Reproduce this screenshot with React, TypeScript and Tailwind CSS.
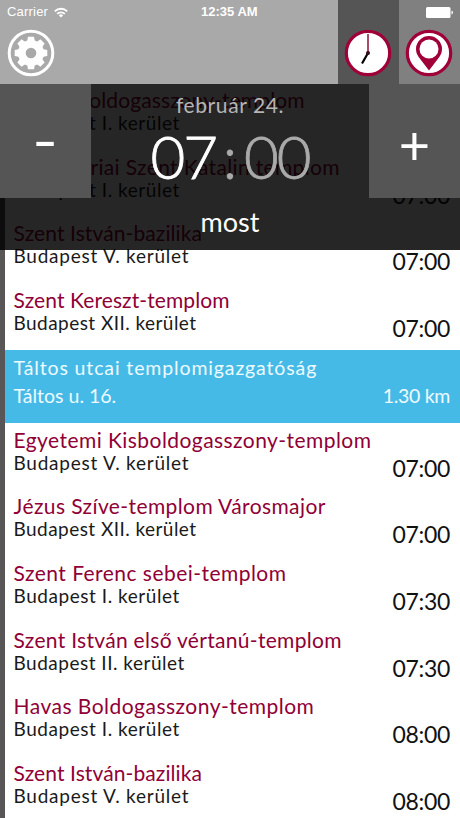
import React from 'react';

interface Mass {
    name: string;
    district: string;
    time: string;
    nameTracking: string;
    districtTracking: string;
}

const upcoming: Mass[] = [
    { name: 'Havas Boldogasszony-templom', district: 'Budapest I. kerület', time: '07:00', nameTracking: 'tracking-[0.12px]', districtTracking: 'tracking-[0.55px]' },
    { name: 'Alexandriai Szent Katalin templom', district: 'Budapest I. kerület', time: '07:00', nameTracking: 'tracking-[0.35px]', districtTracking: 'tracking-[0.55px]' },
    { name: 'Szent István-bazilika', district: 'Budapest V. kerület', time: '07:00', nameTracking: 'tracking-[0.1px]', districtTracking: 'tracking-[0.76px]' },
    { name: 'Szent Kereszt-templom', district: 'Budapest XII. kerület', time: '07:00', nameTracking: 'tracking-[0.1px]', districtTracking: 'tracking-[0.45px]' },
];

const later: Mass[] = [
    { name: 'Egyetemi Kisboldogasszony-templom', district: 'Budapest V. kerület', time: '07:00', nameTracking: 'tracking-[0.44px]', districtTracking: 'tracking-[0.76px]' },
    { name: 'Jézus Szíve-templom Városmajor', district: 'Budapest XII. kerület', time: '07:00', nameTracking: 'tracking-[0.4px]', districtTracking: 'tracking-[0.45px]' },
    { name: 'Szent Ferenc sebei-templom', district: 'Budapest I. kerület', time: '07:30', nameTracking: 'tracking-[0.46px]', districtTracking: 'tracking-[0.55px]' },
    { name: 'Szent István első vértanú-templom', district: 'Budapest II. kerület', time: '07:30', nameTracking: 'tracking-[0.3px]', districtTracking: 'tracking-[0.5px]' },
    { name: 'Havas Boldogasszony-templom', district: 'Budapest I. kerület', time: '08:00', nameTracking: 'tracking-[0.48px]', districtTracking: 'tracking-[0.55px]' },
    { name: 'Szent István-bazilika', district: 'Budapest V. kerület', time: '08:00', nameTracking: 'tracking-[0.1px]', districtTracking: 'tracking-[0.76px]' },
];

function MassRow({ mass }: { mass: Mass }) {
    return (
        <li className="flex h-[66.67px] justify-between whitespace-nowrap pl-[8.5px] pr-[10px]">
            <div className="pt-[4.5px]">
                <p className={`text-[21px] leading-6 text-[#900036] ${mass.nameTracking}`}>{mass.name}</p>
                <p className={`text-[19px] leading-[22px] text-[#1a1a1a] ${mass.districtTracking}`}>{mass.district}</p>
            </div>
            <span className="-ml-20 pt-[30.5px] text-[23px] leading-7 tracking-[-0.3px] text-[#111]">{mass.time}</span>
        </li>
    );
}

function GearIcon() {
    return (
        <svg width="48" height="48" viewBox="-24 -24 48 48">
            <circle r="21.8" fill="none" stroke="#fff" strokeWidth="3" />
            <g fill="#fff">
                {[0, 45, 90, 135].map((angle) => (
                    <path key={angle} d="M-3 -16.3H3L4 -11V11L3 16.3H-3L-4 11V-11Z" transform={`rotate(${angle})`} />
                ))}
                <circle r="13" />
            </g>
            <circle r="5.3" fill="#a9a9a9" />
        </svg>
    );
}

function ClockIcon() {
    return (
        <svg width="48" height="48" viewBox="-24 -24 48 48">
            <circle r="21.7" fill="#fff" stroke="#a00038" strokeWidth="3.2" />
            <path d="M0 0L-6 10.5" stroke="#000" strokeWidth="2.2" />
            <path d="M0 0V-19" stroke="#8c1038" strokeWidth="1.5" />
            <circle r="2" fill="#3a0a1a" />
        </svg>
    );
}

function PinIcon() {
    return (
        <svg width="48" height="48" viewBox="-24 -24 48 48">
            <circle r="21.7" fill="#fff" stroke="#a00038" strokeWidth="3.2" />
            <path d="M0 17.5L-10.35 3.9A13 13 0 1 1 10.35 3.9Z" fill="#a00038" />
            <circle cy="-4" r="9.5" fill="#fff" />
        </svg>
    );
}

function StatusBar() {
    return (
        <div className="absolute inset-x-0 top-0 flex h-6 items-center justify-between pl-[7px] pr-[7px] font-['Liberation_Sans',sans-serif] text-[13px] text-white">
            <div className="flex items-center gap-[6px]">
                <span className="tracking-[0.2px]">Carrier</span>
                <svg width="14" height="11" viewBox="0 0 14 11" fill="none" stroke="#fff" strokeWidth="1.9">
                    <path d="M.8 4.3A8.8 8.8 0 0 1 13.2 4.3" />
                    <path d="M3.2 6.9A5.4 5.4 0 0 1 10.8 6.9" />
                    <path d="M7 10.6L4.9 8.4A3 3 0 0 1 9.1 8.4Z" fill="#fff" stroke="none" />
                </svg>
            </div>
            <span className="absolute left-[201px] text-[13px] font-bold">12:35 AM</span>
            <svg width="27" height="11" viewBox="0 0 27 11" fill="#fff">
                <rect width="24.5" height="11" rx="1.5" />
                <path d="M25.5 3.5Q27 4.2 27 5.5T25.5 7.5Z" />
            </svg>
        </div>
    );
}

function Header() {
    return (
        <header className="relative flex h-[83.5px] bg-[#a9a9a9]">
            <div className="flex-1 pl-[7px] pt-[29px]">
                <GearIcon />
            </div>
            <div className="flex w-[61px] bg-[#555] pl-[6px] pt-[29px]">
                <ClockIcon />
            </div>
            <div className="flex w-[61px] bg-[#808080] pl-[6px] pt-[29px]">
                <PinIcon />
            </div>
            <StatusBar />
        </header>
    );
}

function TimePicker() {
    return (
        <div className="flex h-[166.5px] justify-between bg-black/85 text-white">
            <button className="flex h-[114px] w-[91px] justify-center bg-[#555] pt-[23px] text-[54px] leading-[65px]">
                <span className="scale-x-130">-</span>
            </button>
            <div className="flex flex-col items-center whitespace-nowrap">
                <p className="mt-[9px] text-[21px] leading-6 tracking-[0.6px] text-[#b5b5b5]">február 24.</p>
                <p className="mt-[3px] flex text-[60px] font-light leading-[72px] [-webkit-text-stroke:0.8px_currentColor]">
                    <span className="tracking-[-2px]">07</span>
                    <span className="w-[28px] text-center text-[#aaa]">:</span>
                    <span className="tracking-[-2px] text-[#aaa]">00</span>
                </p>
                <p className="mt-[14px] text-[27px] leading-8">most</p>
            </div>
            <button className="flex h-[114px] w-[91px] justify-center bg-[#555] pt-[28px] text-[54px] leading-[65px]">+</button>
        </div>
    );
}

export default function App() {
    return (
        <div className="relative h-[818px] w-[460px] overflow-hidden bg-white font-[Lato,sans-serif]">
            <main className="h-full border-l-[5px] border-[#585656] pt-[83.5px]">
                <ul>
                    {upcoming.map((mass, i) => (
                        <MassRow key={i} mass={mass} />
                    ))}
                </ul>
                {/* highlighted sponsor row */}
                <div className="h-[73px] whitespace-nowrap bg-[#46bae6] pl-[8.5px] pr-[10px] pt-[3.5px] text-[19.5px] text-[#eefaff]">
                    <p className="leading-7 tracking-[0.87px]">Táltos utcai templomigazgatóság</p>
                    <div className="flex justify-between leading-7">
                        <span>Táltos u. 16.</span>
                        <span className="tracking-[-0.3px]">1.30 km</span>
                    </div>
                </div>
                <ul>
                    {later.map((mass, i) => (
                        <MassRow key={i} mass={mass} />
                    ))}
                </ul>
            </main>
            <div className="absolute inset-x-0 top-0">
                <Header />
                <TimePicker />
            </div>
        </div>
    );
}
